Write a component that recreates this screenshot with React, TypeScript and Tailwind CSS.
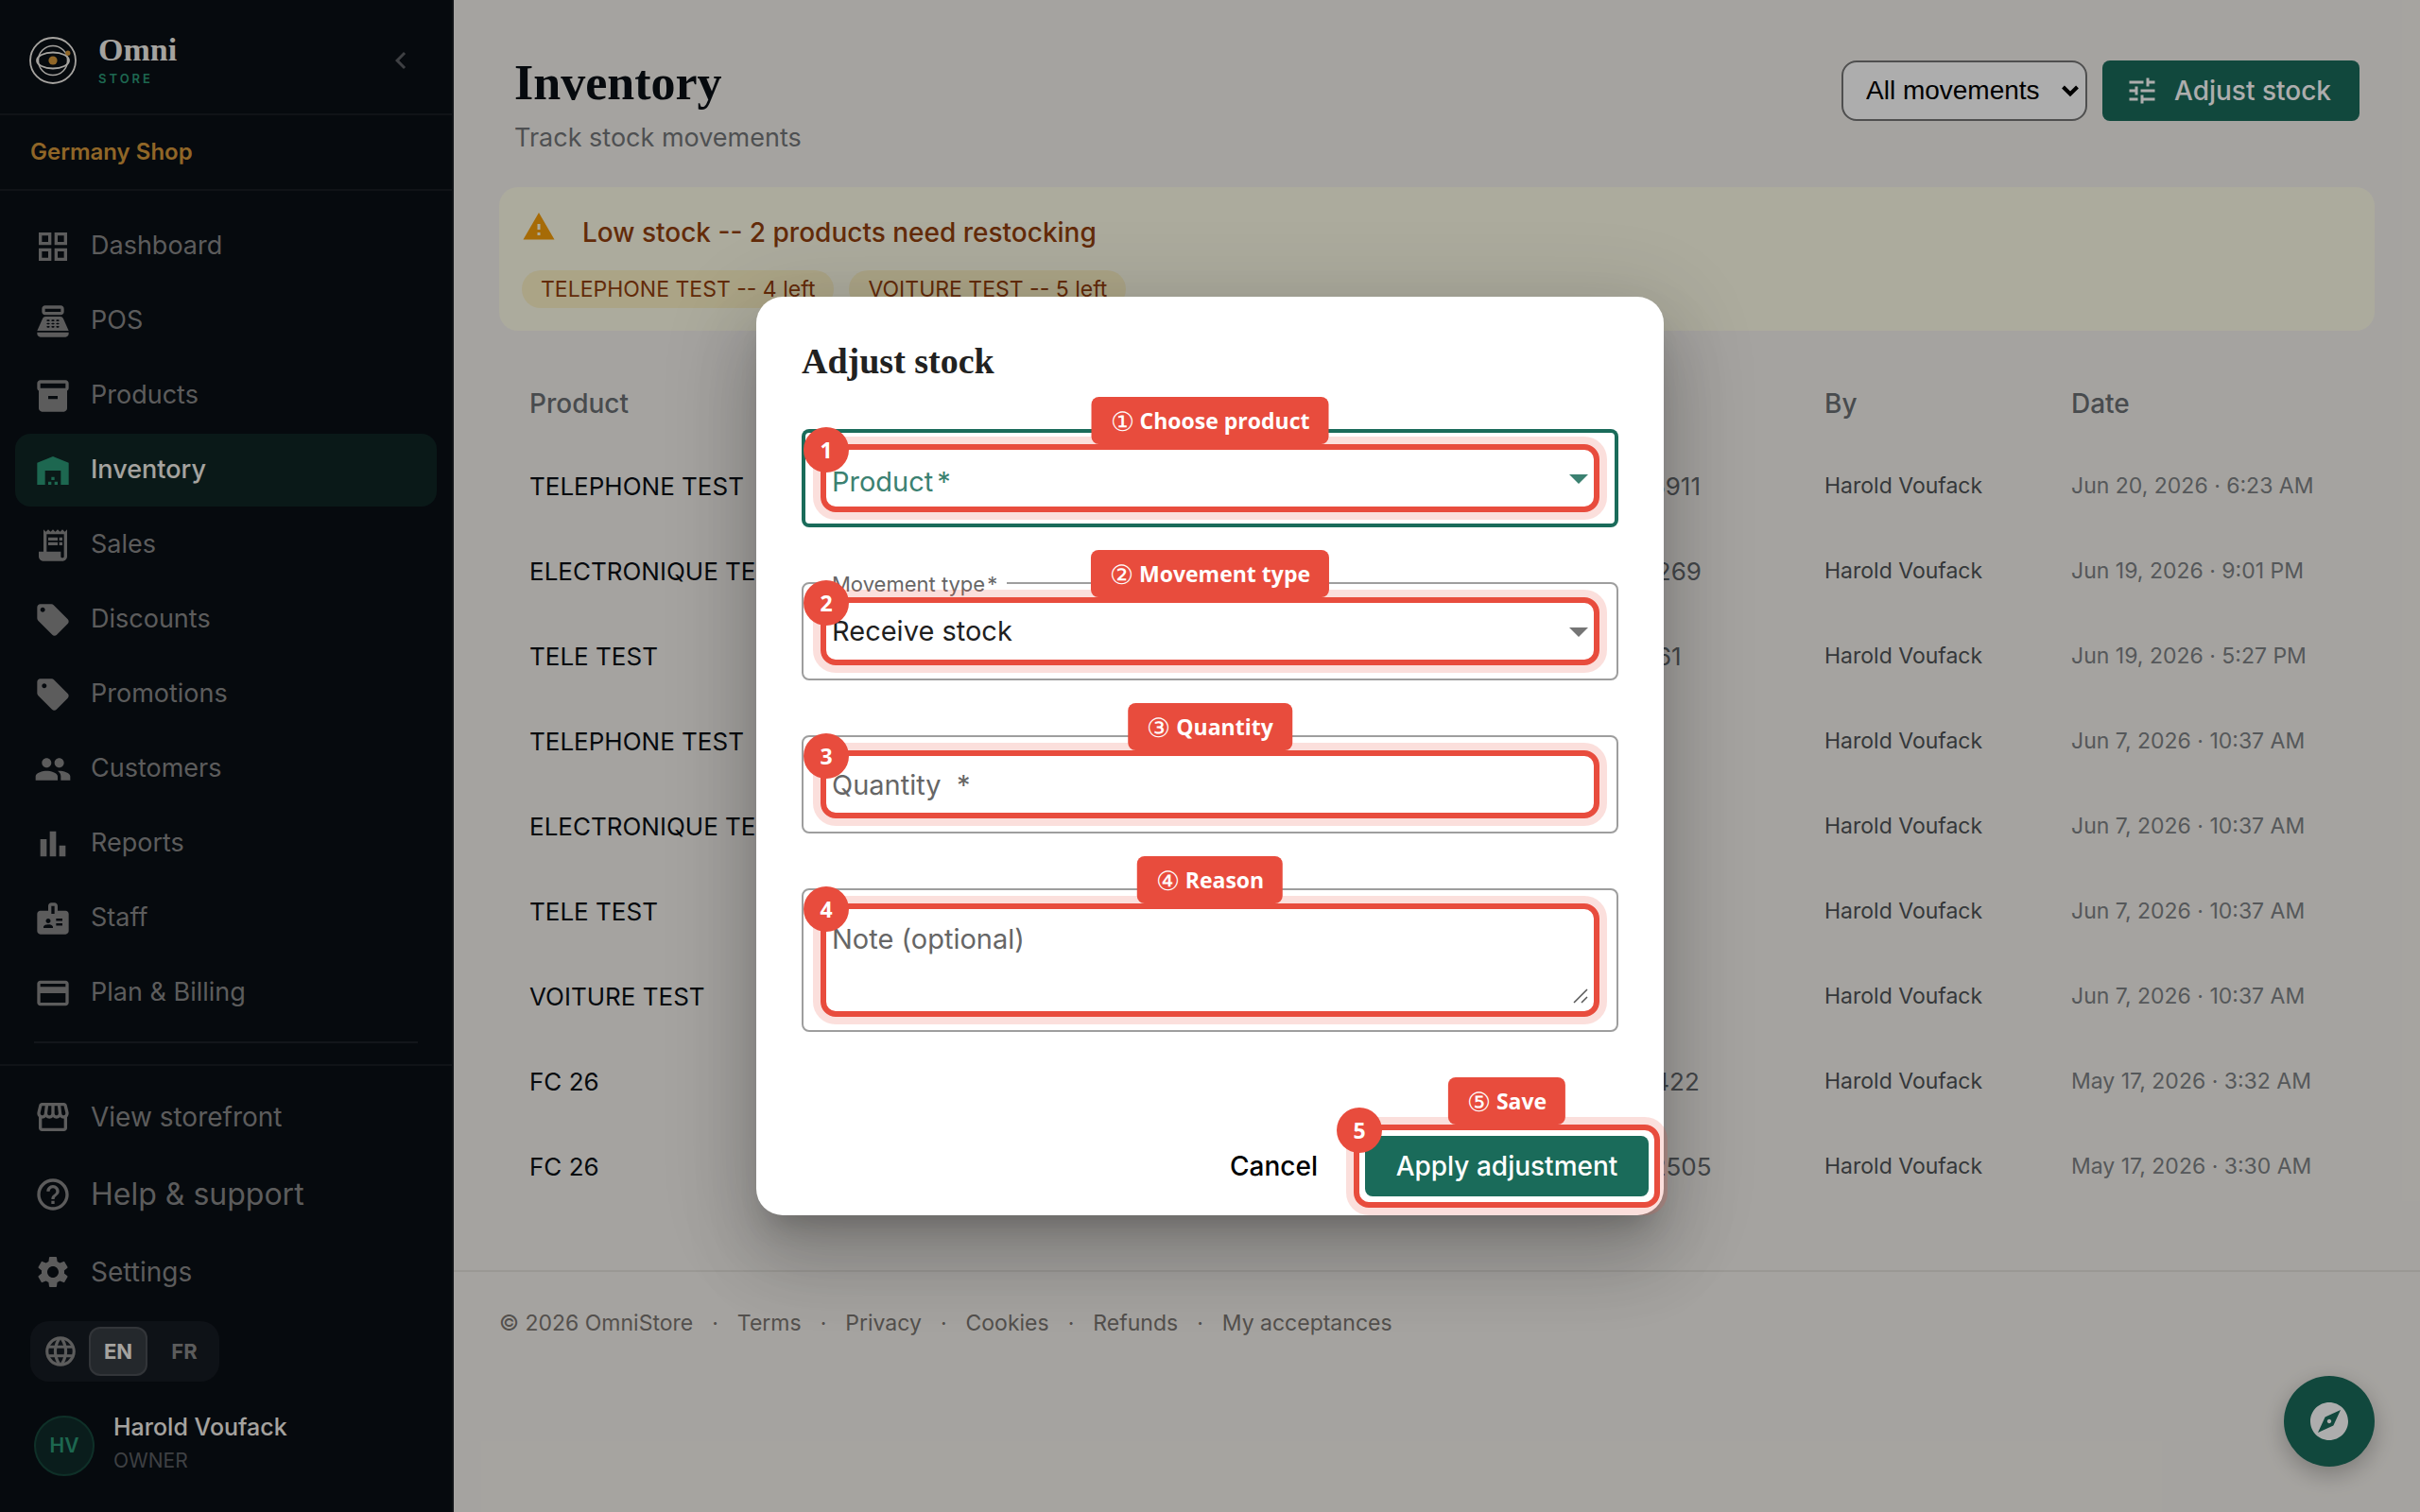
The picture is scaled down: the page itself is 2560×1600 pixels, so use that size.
import React from "react";
import type { ReactNode } from "react";
import type { IconType } from "react-icons";
import {
  MdBadge,
  MdBarChart,
  MdChevronLeft,
  MdCreditCard,
  MdExplore,
  MdHelpOutline,
  MdInventory2,
  MdLanguage,
  MdLocalOffer,
  MdOutlineGridView,
  MdOutlineStorefront,
  MdPeople,
  MdPointOfSale,
  MdReceiptLong,
  MdSell,
  MdSettings,
  MdTune,
  MdWarehouse,
  MdWarning,
} from "react-icons/md";

type NavEntry = { label: string; icon: IconType; active?: boolean };

const mainNav: NavEntry[] = [
  { label: "Dashboard", icon: MdOutlineGridView },
  { label: "POS", icon: MdPointOfSale },
  { label: "Products", icon: MdInventory2 },
  { label: "Inventory", icon: MdWarehouse, active: true },
  { label: "Sales", icon: MdReceiptLong },
  { label: "Discounts", icon: MdLocalOffer },
  { label: "Promotions", icon: MdSell },
  { label: "Customers", icon: MdPeople },
  { label: "Reports", icon: MdBarChart },
  { label: "Staff", icon: MdBadge },
  { label: "Plan & Billing", icon: MdCreditCard },
];

const movements = [
  { product: "TELEPHONE TEST", ref: "Sale 17819365911", date: "Jun 20, 2026 · 6:23 AM" },
  { product: "ELECTRONIQUE TEST", ref: "Sale 1784895269", date: "Jun 19, 2026 · 9:01 PM" },
  { product: "TELE TEST", ref: "Sale 178488261", date: "Jun 19, 2026 · 5:27 PM" },
  { product: "TELEPHONE TEST", ref: "", date: "Jun 7, 2026 · 10:37 AM" },
  { product: "ELECTRONIQUE TEST", ref: "", date: "Jun 7, 2026 · 10:37 AM" },
  { product: "TELE TEST", ref: "", date: "Jun 7, 2026 · 10:37 AM" },
  { product: "VOITURE TEST", ref: "", date: "Jun 7, 2026 · 10:37 AM" },
  { product: "FC 26", ref: "Sale 1784987422", date: "May 17, 2026 · 3:32 AM" },
  { product: "FC 26", ref: "Sale 17849812505", date: "May 17, 2026 · 3:30 AM" },
];

const footerLinks = ["Terms", "Privacy", "Cookies", "Refunds", "My acceptances"];

function Logo() {
  return (
    <svg className="size-[52px] shrink-0" viewBox="-26 -26 52 52" fill="none" aria-hidden="true">
      <g stroke="#f4f1eb" strokeWidth="1.8">
        <circle r="24" />
        <circle r="15.5" strokeWidth="1.5" />
        <ellipse rx="17" ry="8.5" strokeWidth="1.8" />
      </g>
      <circle r="4.6" fill="#d4973a" />
      <circle cx="15.8" cy="-7.8" r="2.6" fill="#d4973a" />
    </svg>
  );
}

function NavItem({ entry, className }: { entry: NavEntry; className: string }) {
  const Icon = entry.icon;
  return (
    <a
      href="#"
      className={`flex items-center gap-5 rounded-2xl px-5 ${className} ${
        entry.active ? "bg-[#0f2524] font-medium text-[#f4f1eb]" : "text-[#888888]"
      }`}
    >
      <Icon className={`size-10 shrink-0 ${entry.active ? "text-[#2b9976]" : ""}`} />
      {entry.label}
    </a>
  );
}

function Sidebar() {
  return (
    <aside className="flex w-[480px] shrink-0 flex-col border-r-2 border-white/6 bg-[#0a0f16]">
      <div className="flex h-[122px] items-center border-b-2 border-white/6 pt-2 pr-9 pl-[30px]">
        <Logo />
        <div className="ml-[22px] flex flex-col">
          <span className="font-['Liberation_Serif',serif] text-[34px] leading-9 font-bold text-[#f4f1eb]">Omni</span>
          <span className="mt-[2px] text-[13px] leading-5 font-semibold tracking-[3px] text-[#2b9976]">STORE</span>
        </div>
        <button type="button" aria-label="Collapse sidebar" className="ml-auto text-[#5c5f63]">
          <MdChevronLeft className="size-9" />
        </button>
      </div>
      <div className="flex h-20 items-center border-b-2 border-white/6 px-8 text-2xl font-semibold text-[#d4973a]">
        Germany Shop
      </div>
      <nav className="flex flex-col gap-[2px] border-b-2 border-white/6 px-4 pt-5 pb-[22px] text-[27px]">
        {mainNav.map((entry) => (
          <NavItem key={entry.label} entry={entry} className="h-[77px]" />
        ))}
        <hr className="mx-5 mt-[11px] border-t-2 border-white/8" />
      </nav>
      <div className="flex flex-col px-4 pt-[14px] pb-8">
        <div className="flex flex-col gap-[2px]">
          <NavItem entry={{ label: "View storefront", icon: MdOutlineStorefront }} className="h-20 text-[28px]" />
          <NavItem entry={{ label: "Help & support", icon: MdHelpOutline }} className="h-20 text-[32px]" />
          <NavItem entry={{ label: "Settings", icon: MdSettings }} className="h-20 text-[28px]" />
        </div>
        <div className="mt-3 ml-4 flex h-16 items-center self-start rounded-[20px] bg-white/5 pr-[6px] pl-[13px] text-[22px] font-bold">
          <MdLanguage className="mr-[11px] size-[38px] text-[#888888]" aria-hidden="true" />
          <button type="button" aria-pressed="true" className="h-[52px] w-[62px] rounded-xl border-2 border-white/10 bg-white/14 text-[#f4f1eb]">
            EN
          </button>
          <button type="button" aria-pressed="false" className="ml-2 h-[52px] w-[62px] rounded-xl text-[#888888]">
            FR
          </button>
        </div>
        <div className="mt-[30px] ml-5 flex items-center gap-5">
          <span className="flex size-16 items-center justify-center rounded-full border-2 border-[#17483c] bg-[#102c2a] text-[21px] font-semibold text-[#2b9976]">
            HV
          </span>
          <span className="flex flex-col pb-1">
            <span className="text-[25px] leading-9 font-medium text-[#f4f1eb]">Harold Voufack</span>
            <span className="text-[21px] leading-9 text-[#5c5f63]">OWNER</span>
          </span>
        </div>
      </div>
    </aside>
  );
}

function PageHeader() {
  return (
    <header className="flex items-start px-4 pt-14">
      <div>
        <h1 className="font-['Liberation_Serif',serif] text-[52px] leading-16 font-bold text-[#0a0f16]">Inventory</h1>
        <p className="mt-2 text-[27px] leading-9 text-[#74777a]">Track stock movements</p>
      </div>
      <div className="mt-2 ml-auto flex gap-4">
        <div className="relative">
          <select
            aria-label="Movement filter"
            className="h-16 w-[260px] appearance-none rounded-2xl border-2 border-[#757575] bg-white pl-6 font-['Liberation_Sans',sans-serif] text-[28px] text-black"
          >
            <option>All movements</option>
          </select>
          <svg className="pointer-events-none absolute top-[25px] right-2 h-[14px] w-5" viewBox="0 0 20 14" fill="none" aria-hidden="true">
            <path d="M2.5 3 10 10.5 17.5 3" stroke="#000" strokeWidth="4" />
          </svg>
        </div>
        <button
          type="button"
          className="flex h-16 w-[272px] items-center gap-4 rounded-lg bg-[#1a6b5a] pl-6 text-[28px] font-medium text-white"
        >
          <MdTune className="size-9" />
          Adjust stock
        </button>
      </div>
    </header>
  );
}

function LowStockBanner() {
  return (
    <section className="mt-[34px] rounded-[20px] bg-[#fefce8] p-6 text-[#92400e]">
      <div className="flex items-start gap-7">
        <MdWarning className="size-9 text-[#f59e0b]" aria-hidden="true" />
        <p className="mt-1 text-[28px] leading-10 font-medium">Low stock -- 2 products need restocking</p>
      </div>
      <ul className="mt-5 flex gap-4 text-[23px] leading-10">
        <li className="rounded-full bg-[#fcf2c6] px-5">TELEPHONE TEST -- 4 left</li>
        <li className="rounded-full bg-[#fcf2c6] px-5">VOITURE TEST -- 5 left</li>
      </ul>
    </section>
  );
}

function MovementsTable() {
  return (
    <table className="mt-[35px] w-full table-fixed text-left">
      <thead>
        <tr className="h-[84px] text-[28px] text-[#6b6f73]">
          <th className="w-[502px] pl-8 font-medium">Product</th>
          <th className="w-[250px] font-medium">Type</th>
          <th className="w-[250px] font-medium">Quantity</th>
          <th className="w-[400px] pl-14 font-medium">Reason</th>
          <th className="w-[261px] font-medium">By</th>
          <th className="font-medium">Date</th>
        </tr>
      </thead>
      <tbody>
        {movements.map((row, index) => (
          <tr key={index} className="h-[90px] text-[23px]">
            <td className="pl-8 text-[26px] text-[#0a0f16]">{row.product}</td>
            <td />
            <td />
            <td className="pl-14 text-[26px] text-[#65696d]">{row.ref}</td>
            <td className="text-[#4f5356]">Harold Voufack</td>
            <td className="text-[#7e8285]">{row.date}</td>
          </tr>
        ))}
      </tbody>
    </table>
  );
}

function Footer() {
  return (
    <footer className="mt-[65px] flex items-center gap-5 border-t-2 border-[#e4e1db] px-12 pt-[38px] text-[23px] leading-8 text-[#7b7672]">
      <span>© 2026 OmniStore</span>
      {footerLinks.map((link) => (
        <span key={link} className="flex gap-5">
          <span aria-hidden="true">·</span>
          <a href="#">{link}</a>
        </span>
      ))}
    </footer>
  );
}

/* Numbered guide frame drawn over a form control. */
function Callout({ step, glyph, text, className }: { step: number; glyph: string; text: string; className: string }) {
  return (
    <div
      className={`pointer-events-none absolute rounded-2xl border-[6px] border-[#e84c3d] font-['Open_Sans',sans-serif] text-[23px] font-bold text-white shadow-[0_0_0_8px_rgba(232,76,61,0.18)] ${className}`}
    >
      <span className="absolute bottom-full left-1/2 mb-[6px] flex h-[50px] -translate-x-1/2 items-center gap-[6px] rounded-lg bg-[#e84c3d] px-5 whitespace-nowrap">
        <span className="text-[28px] font-normal">{glyph}</span>
        {text}
      </span>
      <span className="absolute -top-6 -left-6 flex size-12 items-center justify-center rounded-full bg-[#e84c3d]">
        {step}
      </span>
    </div>
  );
}

function DropArrow({ className }: { className: string }) {
  return (
    <svg className={`pointer-events-none absolute h-[10px] w-5 ${className}`} viewBox="0 0 20 10" fill="currentColor" aria-hidden="true">
      <path d="M0 0h20L10 10z" />
    </svg>
  );
}

function Field({ className, children }: { className: string; children: ReactNode }) {
  return <div className={`relative rounded-lg text-[29px] ${className}`}>{children}</div>;
}

function AdjustStockDialog() {
  return (
    <div className="absolute inset-0 flex items-center justify-center bg-black/32">
      <form
        role="dialog"
        aria-labelledby="dialog-title"
        className="flex w-[960px] flex-col rounded-[28px] bg-white shadow-[0_22px_30px_-14px_rgba(0,0,0,0.2),0_48px_76px_6px_rgba(0,0,0,0.14),0_18px_92px_16px_rgba(0,0,0,0.12)]"
      >
        <h2 id="dialog-title" className="px-12 pt-11 font-['Liberation_Serif',serif] text-[38px] leading-12 font-bold text-[#212121]">
          Adjust stock
        </h2>
        <div className="mt-12 flex flex-col gap-[58px] px-12">
          <Field className="h-[104px] ring-4 ring-[#1a6b5a] ring-inset">
            <label htmlFor="product" className="pointer-events-none absolute top-9 left-8 leading-10 text-[#3b8171]">
              Product<span className="ml-1">*</span>
            </label>
            <select id="product" className="h-full w-full appearance-none bg-transparent pl-8 outline-none" />
            <DropArrow className="top-12 right-8 text-[#3b8171]" />
            <Callout step={1} glyph="①" text="Choose product" className="inset-x-5 inset-y-4" />
          </Field>

          <Field className="h-[104px] border-2 border-[#9e9e9e]">
            <label
              htmlFor="movement-type"
              className="absolute -top-4 left-5 bg-white px-[10px] text-[22px] leading-8 text-[#666666]"
            >
              Movement type<span className="ml-[2px]">*</span>
            </label>
            <select id="movement-type" className="h-full w-full appearance-none bg-transparent pl-[30px] text-[#1f1f1f] outline-none">
              <option>Receive stock</option>
            </select>
            <DropArrow className="top-[46px] right-[30px] text-[#757575]" />
            <Callout step={2} glyph="②" text="Movement type" className="inset-x-[18px] inset-y-[14px]" />
          </Field>

          <Field className="h-[104px] border-2 border-[#9e9e9e]">
            <input
              aria-label="Quantity"
              placeholder="Quantity  *"
              className="h-full w-full bg-transparent pl-[30px] outline-none placeholder:text-[#666666]"
            />
            <Callout step={3} glyph="③" text="Quantity" className="inset-x-[18px] inset-y-[14px]" />
          </Field>

          <Field className="h-[152px] border-2 border-[#9e9e9e]">
            <textarea
              aria-label="Note (optional)"
              placeholder="Note (optional)"
              className="h-full w-full resize-none bg-transparent pt-8 pl-[30px] leading-10 outline-none placeholder:text-[#666666]"
            />
            <svg className="absolute right-[30px] bottom-7 size-4" viewBox="0 0 16 16" stroke="#555" strokeWidth="1.5" aria-hidden="true">
              <path d="M1 15 15 1M9 15l6-6" />
            </svg>
            <Callout step={4} glyph="④" text="Reason" className="inset-x-[18px] inset-y-[14px]" />
          </Field>
        </div>
        <div className="mt-[110px] flex justify-end gap-4 pr-4 pb-5 text-[28px] font-medium">
          <button type="button" className="h-16 rounded-lg px-[34px] text-black">
            Cancel
          </button>
          <div className="relative">
            <button type="submit" className="h-16 w-[300px] rounded-lg bg-[#1a6b5a] text-white">
              Apply adjustment
            </button>
            <Callout step={5} glyph="⑤" text="Save" className="-inset-3" />
          </div>
        </div>
      </form>
    </div>
  );
}

export default function App() {
  return (
    <div className="relative flex min-h-screen bg-[#f4f1ec] font-['Inter',sans-serif]">
      <Sidebar />
      <div className="min-w-0 flex-1">
        <main className="px-12">
          <PageHeader />
          <LowStockBanner />
          <MovementsTable />
        </main>
        <Footer />
      </div>
      <button
        type="button"
        aria-label="Open guide"
        className="absolute right-12 bottom-12 flex size-24 items-center justify-center rounded-full bg-[#1a6b5a] text-white shadow-[0_8px_24px_rgba(0,0,0,0.25)]"
      >
        <MdExplore className="size-12" />
      </button>
      <AdjustStockDialog />
    </div>
  );
}
